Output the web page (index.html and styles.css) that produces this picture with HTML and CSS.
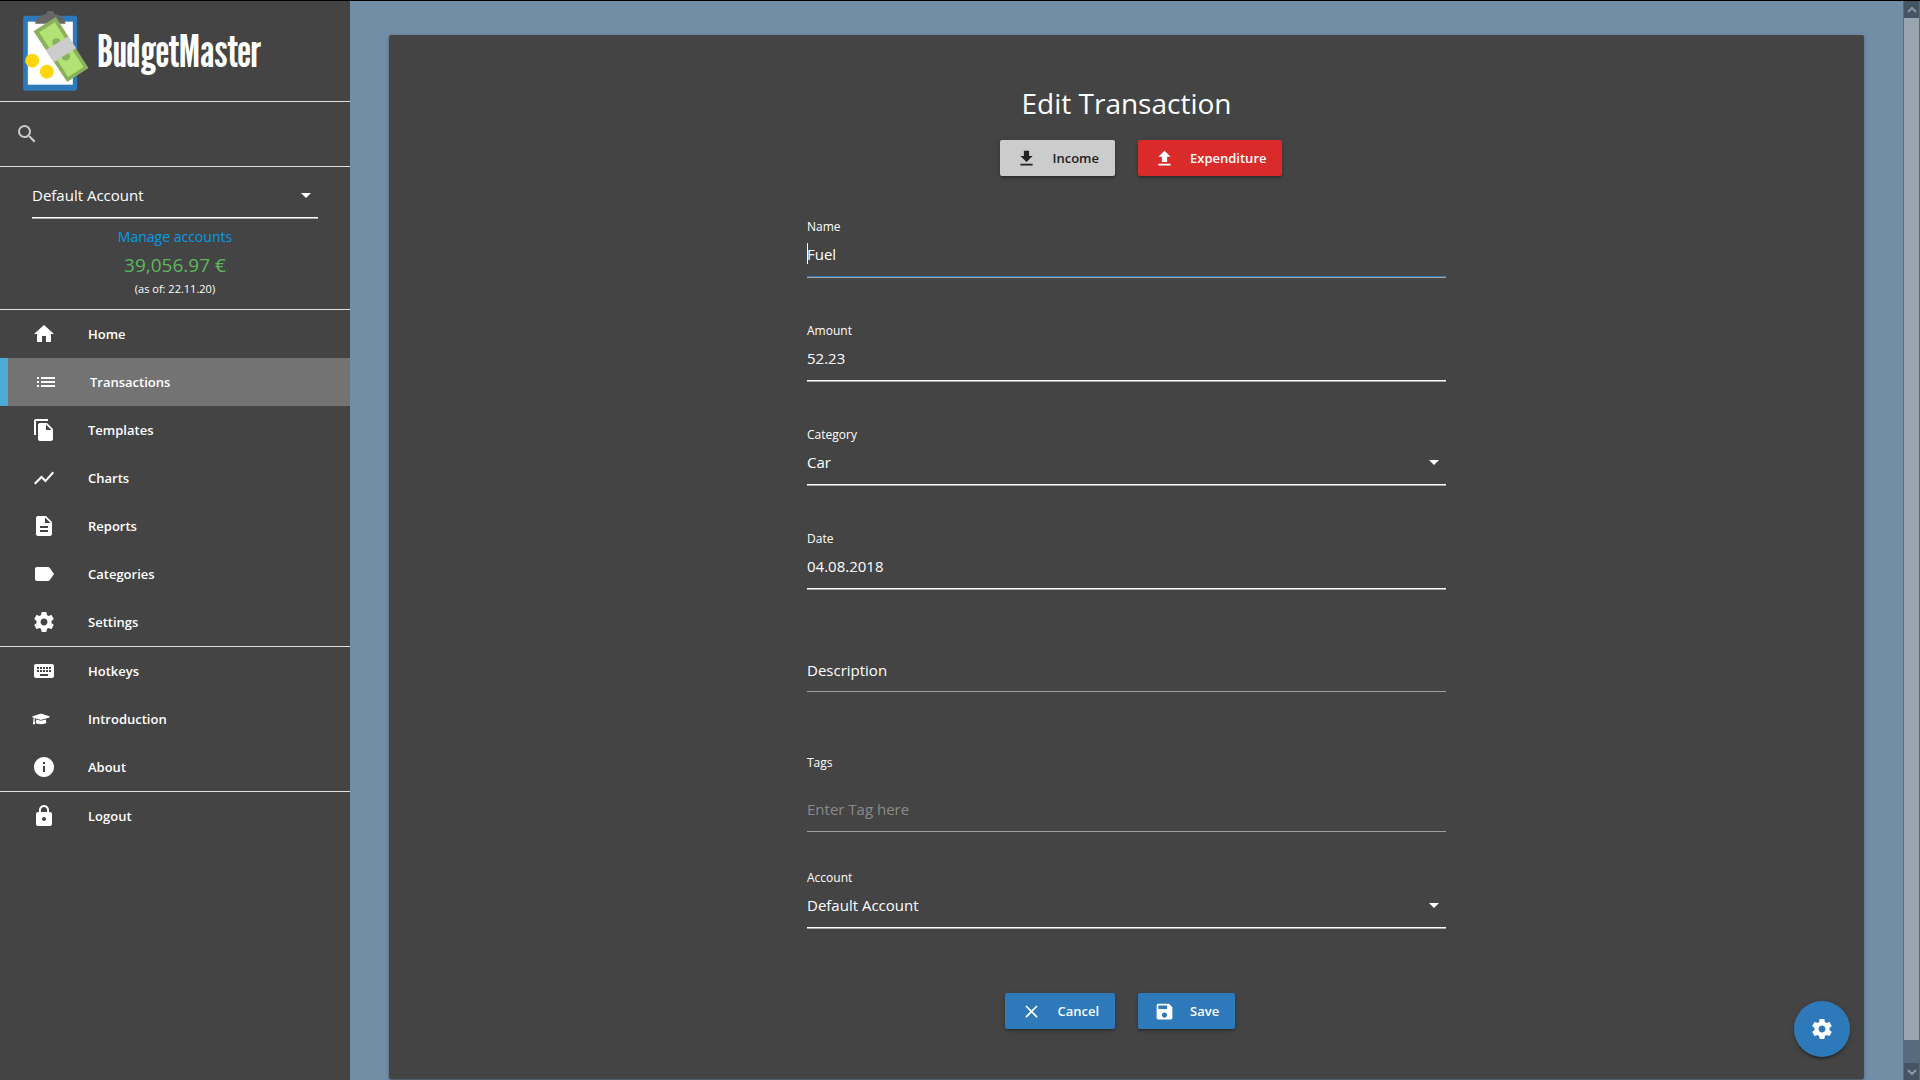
FILE: index.html
```html
<!DOCTYPE html>
<html lang="en">
<head>
<meta charset="utf-8">
<title>BudgetMaster</title>
<link rel="stylesheet" href="styles.css">
</head>
<body>
<div class="app">
  <aside class="sidebar">
    <a class="brand" href="#">
      <svg class="brand-logo" viewBox="69 34 197 240" aria-hidden="true">
        <rect x="69" y="48" width="162" height="225" rx="7" fill="#2e79b9"/>
        <rect x="83" y="66" width="135" height="189" fill="#fff"/>
        <path d="M105 72c0-14 14-27 34-29a11 11 0 0 1 23 0c20 2 34 15 34 29z" fill="#666"/>
        <path d="M100 95l67-43 98 153-64 42z" fill="#8bb05c"/>
        <path d="M117 98l47-30 86 134-46 30z" fill="#b1e273"/>
        <ellipse cx="169" cy="128" rx="13" ry="12" fill="#8bb05c"/>
        <ellipse cx="197" cy="170" rx="13" ry="12" fill="#8bb05c"/>
        <path d="M137 151l68-41 23 36-67 42z" fill="#ccc"/>
        <circle cx="96" cy="183" r="21" fill="#ffd60a"/>
        <circle cx="140" cy="216" r="21" fill="#ffd60a"/>
      </svg>
      <span class="brand-name">BudgetMaster</span>
    </a>
    <form class="search">
      <svg class="icon" viewBox="0 0 24 24" aria-hidden="true"><path d="M15.5 14h-.79l-.28-.27A6.47 6.47 0 0 0 16 9.5 6.5 6.5 0 1 0 9.5 16c1.61 0 3.09-.59 4.23-1.57l.27.28v.79l5 4.99L20.49 19l-4.99-5zm-6 0C7.01 14 5 11.99 5 9.5S7.01 5 9.5 5 14 7.01 14 9.5 11.99 14 9.5 14z"/></svg>
      <input class="search-input" type="search" aria-label="Search">
    </form>
    <section class="account">
      <div class="select">
        <select class="control" aria-label="Selected account"><option>Default Account</option></select>
        <svg class="icon select-arrow" viewBox="0 0 24 24" aria-hidden="true"><path d="M7 10l5 5 5-5z"/></svg>
      </div>
      <a class="account-link" href="#">Manage accounts</a>
      <div class="account-balance">39,056.97 €</div>
      <div class="account-date">(as of: 22.11.20)</div>
    </section>
    <nav class="nav">
      <div class="nav-group">
        <a class="nav-item" href="#"><svg class="icon" viewBox="0 0 24 24"><path d="M10 20v-6h4v6h5v-8h3L12 3 2 12h3v8z"/></svg>Home</a>
        <a class="nav-item nav-item-active" href="#"><svg class="icon" viewBox="0 0 24 24"><path d="M3 13h2v-2H3v2zm0 4h2v-2H3v2zm0-8h2V7H3v2zm4 4h14v-2H7v2zm0 4h14v-2H7v2zM7 7v2h14V7H7z"/></svg>Transactions</a>
        <a class="nav-item" href="#"><svg class="icon" viewBox="0 0 24 24"><path d="M16 1H4c-1.100 0-2 .9-2 2v14h2V3h12V1zm-1 4l6 6v10c0 1.100-.9 2-2 2H7.990C6.890 23 6 22.100 6 21l.010-14c0-1.100.890-2 1.990-2h7zm-1 7h5.500L14 6.500V12z"/></svg>Templates</a>
        <a class="nav-item" href="#"><svg class="icon" viewBox="0 0 24 24"><path d="M3.500 18.490l6-6.010 4 4L22 6.920l-1.410-1.410-7.090 7.970-4-4L2 16.990z"/></svg>Charts</a>
        <a class="nav-item" href="#"><svg class="icon" viewBox="0 0 24 24"><path d="M14 2H6c-1.100 0-1.990.9-1.990 2L4 20c0 1.100.890 2 1.990 2H18c1.100 0 2-.9 2-2V8l-6-6zm2 16H8v-2h8v2zm0-4H8v-2h8v2zm-3-5V3.500L18.500 9H13z"/></svg>Reports</a>
        <a class="nav-item" href="#"><svg class="icon" viewBox="0 0 24 24"><path d="M17.630 5.840C17.270 5.330 16.670 5 16 5L5 5.010C3.900 5.010 3 5.900 3 7v10c0 1.100.9 1.990 2 1.990L16 19c.670 0 1.270-.330 1.630-.840L22 12l-4.370-6.160z"/></svg>Categories</a>
        <a class="nav-item" href="#"><svg class="icon" viewBox="0 0 24 24"><path d="M19.430 12.980c.040-.320.070-.640.070-.980s-.030-.660-.070-.980l2.110-1.650c.190-.150.240-.420.120-.640l-2-3.460c-.120-.220-.390-.300-.610-.220l-2.490 1c-.520-.400-1.080-.730-1.690-.980l-.380-2.650C14.460 2.180 14.250 2 14 2h-4c-.250 0-.460.180-.490.420l-.380 2.650c-.610.250-1.170.590-1.690.980l-2.490-1c-.230-.090-.490 0-.610.220l-2 3.460c-.130.220-.070.490.120.640l2.110 1.650c-.040.320-.070.650-.070.980s.030.660.070.980l-2.110 1.650c-.190.150-.240.420-.120.640l2 3.460c.120.220.390.300.610.220l2.490-1c.520.400 1.080.730 1.690.980l.380 2.650c.030.240.240.420.490.420h4c.250 0 .460-.180.490-.420l.380-2.650c.610-.250 1.170-.590 1.690-.980l2.490 1c.230.090.490 0 .610-.220l2-3.460c.120-.220.070-.490-.120-.640l-2.110-1.650zM12 15.500c-1.930 0-3.500-1.570-3.500-3.500s1.570-3.500 3.500-3.500 3.500 1.570 3.500 3.500-1.570 3.500-3.500 3.500z"/></svg>Settings</a>
      </div>
      <div class="nav-group">
        <a class="nav-item" href="#"><svg class="icon" viewBox="0 0 24 24"><path d="M20 5H4c-1.100 0-1.990.9-1.990 2L2 17c0 1.100.9 2 2 2h16c1.100 0 2-.9 2-2V7c0-1.100-.9-2-2-2zm-9 3h2v2h-2V8zm0 3h2v2h-2v-2zM8 8h2v2H8V8zm0 3h2v2H8v-2zm-1 2H5v-2h2v2zm0-3H5V8h2v2zm9 7H8v-2h8v2zm0-4h-2v-2h2v2zm0-3h-2V8h2v2zm3 3h-2v-2h2v2zm0-3h-2V8h2v2z"/></svg>Hotkeys</a>
        <a class="nav-item" href="#"><svg class="icon icon-cap" viewBox="0 0 640 512"><path d="M622.340 153.200L343.400 67.500c-15.200-4.670-31.600-4.670-46.790 0L17.660 153.200c-23.540 7.230-23.540 38.360 0 45.590l48.630 14.940c-10.670 13.190-17.230 29.280-17.880 46.900C38.780 266.150 32 276.110 32 288c0 10.780 5.680 19.850 13.860 25.650L20.330 428.530C18.110 438.520 25.710 448 35.940 448h56.110c10.240 0 17.840-9.480 15.620-19.470L82.140 313.650C90.320 307.850 96 298.780 96 288c0-11.570-6.470-21.250-15.660-26.870.760-15.020 8.440-28.300 20.690-36.720L296.600 284.500c9.060 2.780 26.440 6.250 46.790 0l278.950-85.700c23.550-7.240 23.550-38.360 0-45.600zM352.790 315.090c-28.530 8.760-52.840 3.920-65.590 0l-145.020-44.550L128 384c0 35.350 85.960 64 192 64s192-28.650 192-64l-14.180-113.470-145.030 44.560z"/></svg>Introduction</a>
        <a class="nav-item" href="#"><svg class="icon" viewBox="0 0 24 24"><path d="M12 2C6.480 2 2 6.480 2 12s4.480 10 10 10 10-4.480 10-10S17.520 2 12 2zm1 15h-2v-6h2v6zm0-8h-2V7h2v2z"/></svg>About</a>
      </div>
      <div class="nav-group">
        <a class="nav-item" href="#"><svg class="icon" viewBox="0 0 24 24"><path d="M18 8h-1V6c0-2.760-2.240-5-5-5S7 3.240 7 6v2H6c-1.100 0-2 .9-2 2v10c0 1.100.9 2 2 2h12c1.100 0 2-.9 2-2V10c0-1.100-.9-2-2-2zm-6 9c-1.100 0-2-.9-2-2s.9-2 2-2 2 .9 2 2-.9 2-2 2zm3.100-9H8.900V6c0-1.710 1.390-3.100 3.100-3.100s3.100 1.390 3.100 3.100v2z"/></svg>Logout</a>
      </div>
    </nav>
  </aside>

  <main class="main">
    <form class="card">
      <h1 class="title">Edit Transaction</h1>
      <div class="button-pair">
        <button class="button button-grey" type="button"><svg class="icon" viewBox="0 0 24 24"><path d="M19 9h-4V3H9v6H5l7 7 7-7zM5 18v2h14v-2H5z"/></svg>Income</button>
        <button class="button button-red" type="button"><svg class="icon" viewBox="0 0 24 24"><path d="M9 16h6v-6h4l-7-7-7 7h4zm-4 2h14v2H5z"/></svg>Expenditure</button>
      </div>
      <div class="fields">
        <div class="field field-focused">
          <label class="label" for="name">Name</label>
          <input class="control" id="name" type="text" value="Fuel">
        </div>
        <div class="field">
          <label class="label" for="amount">Amount</label>
          <input class="control" id="amount" type="text" value="52.23">
        </div>
        <div class="field">
          <label class="label" for="category">Category</label>
          <div class="select">
            <select class="control" id="category"><option>Car</option></select>
            <svg class="icon select-arrow" viewBox="0 0 24 24" aria-hidden="true"><path d="M7 10l5 5 5-5z"/></svg>
          </div>
        </div>
        <div class="field">
          <label class="label" for="date">Date</label>
          <input class="control" id="date" type="text" value="04.08.2018">
        </div>
        <div class="field field-description">
          <textarea class="control control-plain" rows="1" aria-label="Description" placeholder="Description"></textarea>
        </div>
        <div class="field field-tags">
          <label class="label" for="tags">Tags</label>
          <input class="control control-plain" id="tags" type="text" placeholder="Enter Tag here">
        </div>
        <div class="field">
          <label class="label" for="account">Account</label>
          <div class="select">
            <select class="control" id="account"><option>Default Account</option></select>
            <svg class="icon select-arrow" viewBox="0 0 24 24" aria-hidden="true"><path d="M7 10l5 5 5-5z"/></svg>
          </div>
        </div>
      </div>
      <div class="button-pair">
        <button class="button" type="button"><svg class="icon" viewBox="0 0 24 24"><path d="M19 6.410L17.590 5 12 10.590 6.410 5 5 6.410 10.590 12 5 17.590 6.410 19 12 13.410 17.590 19 19 17.590 13.410 12z"/></svg>Cancel</button>
        <button class="button" type="submit"><svg class="icon" viewBox="0 0 24 24"><path d="M17 3H5c-1.110 0-2 .9-2 2v14c0 1.100.890 2 2 2h14c1.100 0 2-.9 2-2V7l-4-4zm-5 16c-1.660 0-3-1.340-3-3s1.340-3 3-3 3 1.340 3 3-1.340 3-3 3zm3-10H5V5h10v4z"/></svg>Save</button>
      </div>
    </form>
  </main>

  <div class="scrollbar" aria-hidden="true">
    <span class="scrollbar-button"><svg class="scrollbar-icon" viewBox="0 0 10 8"><path d="M1 6l4-4 4 4"/></svg></span>
    <span class="scrollbar-thumb"></span>
    <span class="scrollbar-button"><svg class="scrollbar-icon" viewBox="0 0 10 8"><path d="M1 2l4 4 4-4"/></svg></span>
  </div>

  <button class="fab" type="button" aria-label="Options"><svg class="icon" viewBox="0 0 24 24"><path d="M19.430 12.980c.040-.320.070-.640.070-.980s-.030-.660-.070-.980l2.110-1.650c.190-.150.240-.420.120-.640l-2-3.460c-.120-.220-.390-.300-.610-.220l-2.490 1c-.520-.400-1.080-.730-1.690-.980l-.380-2.650C14.460 2.180 14.250 2 14 2h-4c-.250 0-.460.180-.490.420l-.380 2.650c-.610.250-1.170.590-1.690.980l-2.490-1c-.230-.090-.490 0-.610.220l-2 3.460c-.130.220-.070.490.120.640l2.110 1.650c-.040.320-.070.650-.070.980s.030.660.070.980l-2.110 1.650c-.190.150-.240.420-.120.640l2 3.460c.120.220.390.300.610.220l2.490-1c.520.400 1.080.730 1.690.980l.380 2.650c.030.240.240.420.490.420h4c.250 0 .460-.180.490-.420l.380-2.650c.610-.250 1.170-.590 1.690-.980l2.490 1c.230.090.490 0 .610-.220l2-3.460c.120-.220.070-.490-.120-.640l-2.110-1.650zM12 15.500c-1.930 0-3.500-1.570-3.500-3.500s1.570-3.500 3.500-3.500 3.500 1.570 3.500 3.500-1.570 3.500-3.500 3.500z"/></svg></button>
</div>
</body>
</html>
```
FILE: styles.css
```css
* {
  box-sizing: border-box;
}

body {
  margin: 0;
  background: #728ea6;
  color: #fff;
  font-family: "Open Sans", "Noto Sans", sans-serif;
  font-size: 15px;
  line-height: 24px;
}

a {
  color: inherit;
  text-decoration: none;
}

.app {
  display: flex;
  min-height: 100vh;
  border-top: 1px solid #000;
}

.icon {
  flex: none;
  width: 24px;
  height: 24px;
  fill: currentColor;
}

/* Sidebar */

.sidebar {
  flex: none;
  width: 350px;
  background: #444;
}

.brand {
  display: flex;
  align-items: center;
  gap: 8px;
  height: 101px;
  padding: 0 23px;
  border-bottom: 1px solid #e0e0e0;
}

.brand-logo {
  width: 66px;
  height: 80px;
}

.brand-name {
  font-family: "League Gothic", "Roboto Condensed", "Open Sans Condensed", Roboto, sans-serif;
  font-size: 44px;
  font-weight: 400;
  line-height: 48px;
}

.search {
  display: flex;
  align-items: center;
  gap: 16px;
  height: 65px;
  padding: 0 15px;
  border-bottom: 1px solid #e0e0e0;
  color: #ccc;
}

.search-input {
  flex: 1;
  min-width: 0;
  border: 0;
  background: none;
  color: inherit;
  font: inherit;
}

.account {
  display: flex;
  flex-direction: column;
  align-items: center;
  height: 143px;
  padding: 9px 32px 0;
  border-bottom: 1px solid #e0e0e0;
}

.account .select {
  width: 100%;
}

.account-link {
  margin-top: 6px;
  color: #039be5;
  font-size: 14px;
}

.account-balance {
  margin-top: 2px;
  color: #5cb85c;
  font-size: 19px;
  line-height: 28px;
}

.account-date {
  font-size: 11px;
  line-height: 20px;
}

.nav-group + .nav-group {
  border-top: 1px solid #e0e0e0;
}

.nav-item {
  display: flex;
  align-items: center;
  gap: 32px;
  height: 48px;
  padding: 0 32px;
  font-size: 13px;
  font-weight: 600;
}

.nav-item-active {
  padding-left: 26px;
  border-left: 8px solid #4caad4;
  background: #737373;
}

.icon-cap {
  width: 18px;
  height: 14px;
  margin-right: 6px;
}

/* Form card */

.main {
  flex: 1;
  min-width: 0;
  padding: 34px 39px 1px;
}

.card {
  display: flex;
  flex-direction: column;
  padding: 48px 24px 50px;
  border-radius: 2px;
  background: #444;
  box-shadow: 0 2px 2px rgba(0, 0, 0, .14), 0 3px 1px -2px rgba(0, 0, 0, .12), 0 1px 5px rgba(0, 0, 0, .2);
}

.title {
  margin: 0 0 17px;
  font-size: 28px;
  font-weight: 400;
  line-height: 40px;
  text-align: center;
}

.button-pair {
  display: grid;
  grid-template-columns: 1fr 1fr;
  gap: 23px;
  justify-items: start;
}

.button-pair .button:first-child {
  justify-self: end;
}

.button {
  display: flex;
  align-items: center;
  gap: 15px;
  height: 36px;
  padding: 0 16px;
  border: 0;
  border-radius: 2px;
  background: #2e79b9;
  box-shadow: 0 2px 2px rgba(0, 0, 0, .14), 0 3px 1px -2px rgba(0, 0, 0, .12), 0 1px 5px rgba(0, 0, 0, .2);
  color: #fff;
  font: inherit;
  font-size: 13px;
  font-weight: 600;
}

.button .icon {
  width: 21px;
  height: 21px;
}

.button-grey {
  background: #ccc;
  color: #212121;
}

.button-red {
  background: #d92b2a;
}

.fields {
  display: flex;
  flex-direction: column;
  gap: 45px;
  width: 100%;
  max-width: 639px;
  margin: 43px auto 64px;
}

.field {
  display: flex;
  flex-direction: column;
}

.field-description {
  margin-top: 14px;
}

.field-tags {
  gap: 18px;
  margin: 18px 0 -7px;
}

.label {
  font-size: 12px;
  line-height: 16px;
}

.control {
  display: block;
  width: 100%;
  height: 42px;
  margin: 0 0 1px;
  padding: 0 0 3px;
  border: 0;
  border-bottom: 1px solid #fff;
  border-radius: 0;
  outline: 0;
  background: none;
  box-shadow: 0 1px #a8a8a8;
  color: #fff;
  font: inherit;
  appearance: none;
}

.control-plain {
  height: 43px;
  margin: 0;
  border-color: #9e9e9e;
  box-shadow: none;
}

textarea.control {
  padding-top: 9px;
  overflow: hidden;
  resize: none;
}

.control::placeholder {
  color: #8a8a8a;
  opacity: 1;
}

textarea.control::placeholder {
  color: #fff;
}

.field-focused {
  position: relative;
}

.field-focused .control {
  border-color: #2e79b9;
}

/* Text cursor of the focused field */
.field-focused::after {
  content: "";
  position: absolute;
  top: 24px;
  left: 0;
  width: 1px;
  height: 21px;
  background: #fff;
}

.select {
  display: grid;
  align-items: center;
}

.select .control,
.select-arrow {
  grid-area: 1 / 1;
}

.select-arrow {
  justify-self: end;
  margin-bottom: 5px;
  pointer-events: none;
}

/* Scrollbar */

.scrollbar {
  display: flex;
  flex: none;
  flex-direction: column;
  width: 17px;
  padding: 0 1px;
  background: #566b7e;
}

.scrollbar-button {
  display: flex;
  align-items: center;
  justify-content: center;
  height: 17px;
  background: #445463;
}

.scrollbar-icon {
  width: 10px;
  height: 8px;
  fill: none;
  stroke: #8a98a3;
  stroke-width: 2;
}

.scrollbar-thumb {
  flex: 1;
  margin-bottom: 23px;
  background: #99a5ae;
}

.fab {
  position: fixed;
  right: 70px;
  bottom: 23px;
  display: flex;
  align-items: center;
  justify-content: center;
  width: 56px;
  height: 56px;
  padding: 0;
  border: 0;
  border-radius: 50%;
  background: #2e79b9;
  box-shadow: 0 3px 3px rgba(0, 0, 0, .14), 0 1px 7px rgba(0, 0, 0, .12), 0 3px 1px -1px rgba(0, 0, 0, .2);
  color: #fff;
}
```
